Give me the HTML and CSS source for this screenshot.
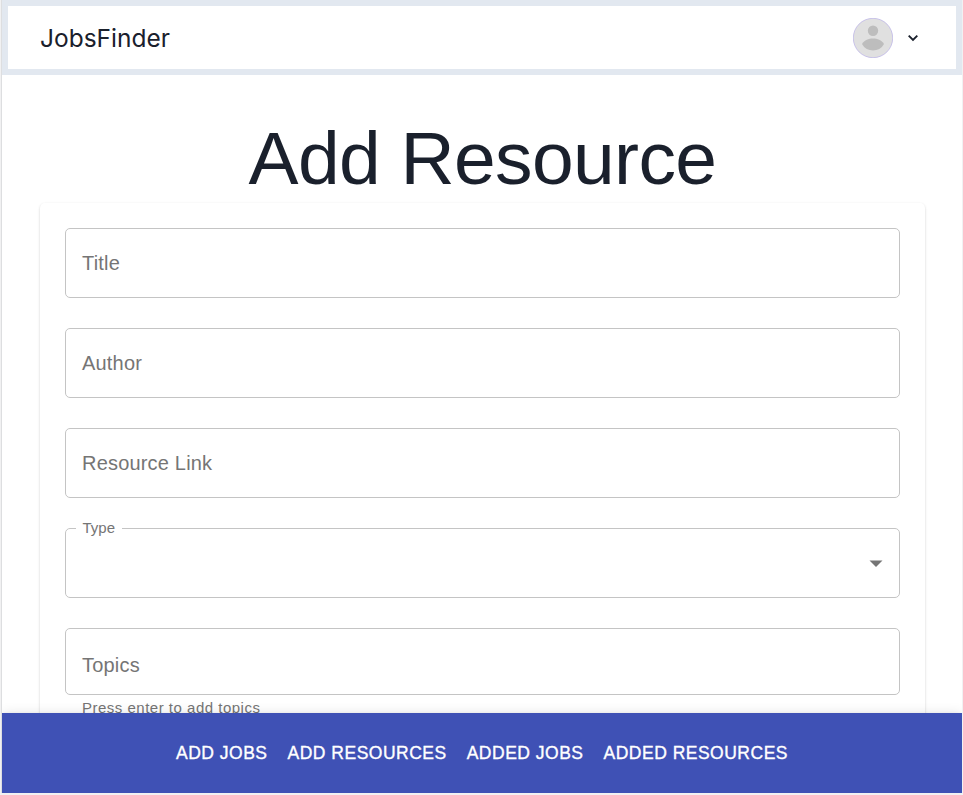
FILE: index.html
```html
<!DOCTYPE html>
<html lang="en">
<head>
<meta charset="utf-8">
<title>JobsFinder</title>
<link rel="stylesheet" href="styles.css">
</head>
<body>
<div class="app">
  <header class="header">
    <span class="brand">JobsFinder</span>
    <div class="account">
      <svg class="avatar" viewBox="0 0 40 40"><circle cx="20" cy="20" r="19.7" fill="#e0e0e0" stroke="#b9b0e6" stroke-width=".7"/><circle cx="20" cy="12.700" r="5.200" fill="#bdbdbd"/><path d="M9 26C11.500 22.200 15.500 20.600 20 20.600S28.500 22.200 31 26C28.500 30.500 24.500 32.400 20 32.400S11.500 30.500 9 26Z" fill="#bdbdbd"/></svg>
      <svg class="chevron" viewBox="0 0 12 8"><path d="M1.700 1.700 6 6 10.300 1.700" fill="none" stroke="#1a202c" stroke-width="1.900"/></svg>
    </div>
  </header>
  <main class="main">
    <h1 class="heading">Add Resource</h1>
    <form class="card">
      <div class="field">Title</div>
      <div class="field">Author</div>
      <div class="field">Resource Link</div>
      <fieldset class="field select">
        <legend class="legend">Type</legend>
        <svg class="arrow" viewBox="0 0 14 7"><path d="M.5.5h13L7 7z" fill="#757575"/></svg>
      </fieldset>
      <div class="field topics">Topics</div>
      <p class="helper">Press enter to add topics</p>
    </form>
  </main>
  <nav class="nav">
    <a>ADD JOBS</a>
    <a>ADD RESOURCES</a>
    <a>ADDED JOBS</a>
    <a>ADDED RESOURCES</a>
  </nav>
</div>
</body>
</html>
```
FILE: styles.css
```css
* { box-sizing: border-box; }
body {
  margin: 0;
  height: 795px;
  overflow: hidden;
  background: #f1f1f2;
  font-family: "Liberation Sans", Arial, sans-serif;
}
.app {
  width: 961px;
  height: 793px;
  margin-left: 1px;
  border-left: 1px solid #dddee0;
  background: #fff;
  display: flex;
  flex-direction: column;
}
.header {
  flex: none;
  height: 75px;
  border: 6px solid #e2e8f0;
  padding: 0 37px 0 32px;
  display: flex;
  align-items: center;
  justify-content: space-between;
}
.brand {
  font: 400 24.5px/32px Inter, sans-serif;
  color: #1a202c;
}
.account { display: flex; align-items: center; gap: 14px; }
.avatar { width: 40px; height: 40px; }
.chevron { width: 12px; height: 8px; }
.main {
  flex: 1;
  min-height: 0;
  overflow: hidden;
  padding: 38px 37px 0 38px;
}
.heading {
  margin: 0;
  font-size: 75px;
  font-weight: 400;
  line-height: 90px;
  letter-spacing: -.00833em;
  text-align: center;
  color: #1a202c;
}
.card {
  height: 700px;
  padding: 25px;
  border-radius: 5px;
  box-shadow: 0 1px 3px rgba(0, 0, 0, .12), 0 1px 2px rgba(0, 0, 0, .08);
}
.field {
  height: 70px;
  margin: 0 0 30px;
  padding: 0 16px;
  border: 1px solid #c4c4c4;
  border-radius: 5px;
  display: flex;
  align-items: center;
  font-size: 20px;
  letter-spacing: .00938em;
  color: #757575;
}
.select {
  height: 79px;
  margin-top: -9px;
  padding: 0 16px 8px 10px;
  justify-content: flex-end;
}
.legend {
  padding: 0 6.5px;
  font-size: 15px;
  line-height: 18px;
  letter-spacing: 0;
}
.arrow { width: 14px; height: 7px; }
.topics { height: 67px; margin-bottom: 4px; padding-top: 8px; }
.helper {
  margin: 0 17px;
  font-size: 15px;
  line-height: 18px;
  letter-spacing: .03333em;
  color: #757575;
}
.nav {
  flex: none;
  height: 80px;
  z-index: 1;
  display: flex;
  align-items: center;
  justify-content: center;
  gap: 20px;
  background: #3f51b5;
  box-shadow: 0 2px 5px -1px rgba(0, 0, 0, .2), 0 5px 6px rgba(0, 0, 0, .14), 0 1px 12px rgba(0, 0, 0, .12);
  clip-path: inset(-20px 0 0 0);
  color: #fff;
  font-size: 17.5px;
  font-weight: 500;
  letter-spacing: .02857em;
  -webkit-text-stroke: .35px #fff;
}
```
